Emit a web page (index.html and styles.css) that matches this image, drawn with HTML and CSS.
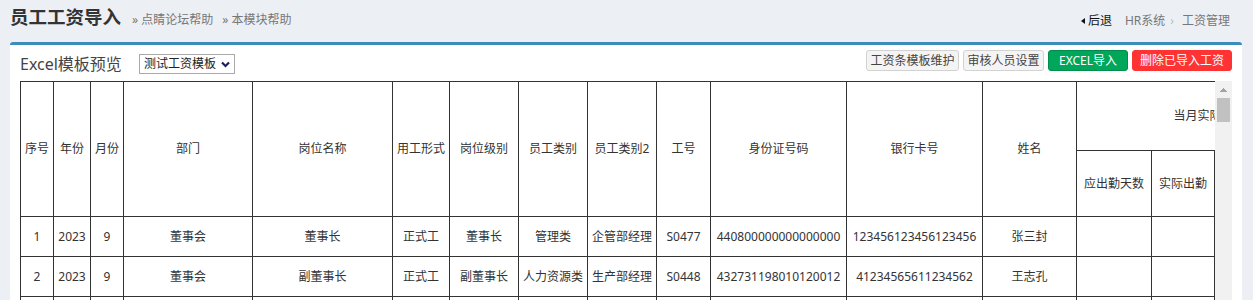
FILE: index.html
```html
<!DOCTYPE html>
<html lang="zh-CN">
<head>
    <meta charset="UTF-8">
    <meta name="viewport" content="width=device-width, initial-scale=1.0">
    <title>员工工资导入</title>
    <link rel="stylesheet" href="styles.css">
</head>
<body>
    <div class="content-header">
        <h1>员工工资导入<small>» 点睛论坛帮助</small><small>» 本模块帮助</small></h1>
        <ol class="breadcrumb">
            <li><a class="back">后退</a></li>
            <li>HR系统</li>
            <li>工资管理</li>
        </ol>
    </div>
    <div class="box">
        <div class="toolbar">
            <div class="preview">
                <span class="preview-title">Excel模板预览</span>
                <span class="select-wrap">
                    <select id="template">
                        <option>测试工资模板</option>
                    </select>
                    <svg class="chevron" width="9" height="7" viewBox="0 0 9 7"><path d="M1 1.5 L4.5 5 L8 1.5" fill="none" stroke="#1e1e5c" stroke-width="2.2"/></svg>
                </span>
            </div>
            <div class="actions">
                <a class="btn">工资条模板维护</a>
                <a class="btn">审核人员设置</a>
                <a class="btn btn-success">EXCEL导入</a>
                <a class="btn btn-danger">删除已导入工资</a>
            </div>
        </div>
        <div class="sheet-wrap">
            <div class="sheet">
                <table>
                    <colgroup>
                        <col style="width:33px"><col style="width:37px"><col style="width:33px"><col style="width:129px">
                        <col style="width:140px"><col style="width:57px"><col style="width:69px"><col style="width:69px">
                        <col style="width:69px"><col style="width:54px"><col style="width:136px"><col style="width:136px">
                        <col style="width:94px"><col style="width:75px"><col style="width:63px"><col style="width:64px">
                        <col style="width:64px"><col style="width:80px"><col style="width:80px"><col style="width:80px">
                    </colgroup>
                    <thead>
                        <tr class="head-top">
                            <th rowspan="2">序号</th>
                            <th rowspan="2">年份</th>
                            <th rowspan="2">月份</th>
                            <th rowspan="2">部门</th>
                            <th rowspan="2">岗位名称</th>
                            <th rowspan="2">用工形式</th>
                            <th rowspan="2">岗位级别</th>
                            <th rowspan="2">员工类别</th>
                            <th rowspan="2">员工类别2</th>
                            <th rowspan="2">工号</th>
                            <th rowspan="2">身份证号码</th>
                            <th rowspan="2">银行卡号</th>
                            <th rowspan="2">姓名</th>
                            <th colspan="4">当月实际考勤</th>
                            <th rowspan="2">基本工资</th>
                            <th rowspan="2">岗位工资</th>
                            <th rowspan="2">实发工资</th>
                        </tr>
                        <tr class="head-sub">
                            <th>应出勤天数</th>
                            <th>实际出勤</th>
                            <th>请假天数</th>
                            <th>旷工天数</th>
                        </tr>
                    </thead>
                    <tbody>
                        <tr>
                            <td>1</td><td>2023</td><td>9</td><td>董事会</td><td>董事长</td><td>正式工</td><td>董事长</td>
                            <td>管理类</td><td>企管部经理</td><td>S0477</td><td>440800000000000000</td><td>123456123456123456</td>
                            <td>张三封</td><td></td><td></td><td></td><td></td><td></td><td></td><td></td>
                        </tr>
                        <tr>
                            <td>2</td><td>2023</td><td>9</td><td>董事会</td><td>副董事长</td><td>正式工</td><td>副董事长</td>
                            <td>人力资源类</td><td>生产部经理</td><td>S0448</td><td>432731198010120012</td><td>41234565611234562</td>
                            <td>王志孔</td><td></td><td></td><td></td><td></td><td></td><td></td><td></td>
                        </tr>
                        <tr>
                            <td>3</td><td>2023</td><td>9</td><td>生产部</td><td>生产主管</td><td>正式工</td><td>主管</td>
                            <td>生产类</td><td>生产部主管</td><td>S0502</td><td>440300198703210015</td><td>62220200112233445</td>
                            <td>陈立</td><td></td><td></td><td></td><td></td><td></td><td></td><td></td>
                        </tr>
                    </tbody>
                </table>
            </div>
            <div class="vscroll">
                <span class="vscroll-up"></span>
                <span class="vscroll-thumb"></span>
            </div>
        </div>
    </div>
</body>
</html>
```

FILE: styles.css
```css
body {
    margin: 0;
    padding: 0 11px 0 10px;
    background-color: #ecf0f5;
    font-family: "Noto Sans", "Noto Sans CJK SC", sans-serif;
    font-size: 12px;
    color: #333;
}
.content-header {
    display: flex;
    justify-content: space-between;
    align-items: flex-start;
    height: 42px;
    box-sizing: border-box;
    padding-top: 5px;
}
.content-header h1 {
    margin: 0;
    font-size: 18.5px;
    line-height: 24px;
    font-weight: bold;
    color: #333;
}
.content-header small {
    font-size: 12px;
    font-weight: normal;
    color: #777;
    margin-left: 11px;
}
.content-header small + small {
    margin-left: 9px;
}
.breadcrumb {
    display: flex;
    margin: 8px 12px 0 0;
    padding: 0;
    list-style: none;
    line-height: 16px;
    color: #777;
}
.breadcrumb li + li::before {
    content: "›";
    color: #bbb;
    padding: 0 8px 0 5px;
}
.breadcrumb li:first-child + li::before {
    content: none;
}
.back {
    color: #111;
    margin-right: 13px;
}
.back::before {
    content: "";
    display: inline-block;
    border-right: 4px solid #111;
    border-top: 3.5px solid transparent;
    border-bottom: 3.5px solid transparent;
    margin-right: 3px;
    vertical-align: 1px;
}
.box {
    background-color: #fff;
    border-top: 3px solid #3c8dbc;
    border-radius: 3px;
    padding: 0 10px;
}
.toolbar {
    display: flex;
    justify-content: space-between;
    align-items: flex-start;
    padding: 5px 0 7px;
}
.preview {
    display: flex;
    align-items: center;
    gap: 17px;
    margin-top: 4px;
}
.preview-title {
    font-size: 16px;
    line-height: 20px;
    color: #444;
}
.select-wrap {
    position: relative;
    display: inline-block;
    height: 20px;
}
.select-wrap select {
    appearance: none;
    width: 96px;
    height: 20px;
    box-sizing: border-box;
    border: 1px solid #a9a9a9;
    border-radius: 0;
    background: #fff;
    padding: 0 0 0 4px;
    font-family: inherit;
    font-size: 12px;
    line-height: 18px;
    color: #222;
}
.chevron {
    position: absolute;
    right: 5px;
    top: 7px;
    pointer-events: none;
}
.actions {
    display: flex;
    gap: 4px;
}
.btn {
    display: inline-block;
    height: 21px;
    box-sizing: border-box;
    line-height: 19px;
    padding: 0 3.5px;
    border: 1px solid #d2d2d2;
    border-radius: 3px;
    background-color: #f4f4f4;
    color: #444;
    white-space: nowrap;
}
.btn-success {
    background-color: #00a65a;
    border-color: #008d4c;
    color: #fff;
    padding: 0 10px;
}
.btn-danger {
    background-color: #f33;
    border-color: #f33;
    color: #fff;
    padding: 0 7px;
}
.sheet-wrap {
    position: relative;
}
.sheet {
    overflow: hidden;
    margin-right: 17px;
}
.sheet table {
    border-collapse: collapse;
    table-layout: fixed;
    width: 1522px;
}
.sheet th,
.sheet td {
    border: 1px solid #333;
    padding: 0 2px;
    text-align: center;
    font-weight: normal;
    white-space: nowrap;
    overflow: hidden;
    line-height: 16px;
}
.head-top {
    height: 69px;
}
.head-sub {
    height: 66px;
}
.sheet tbody tr {
    height: 40px;
}
/* 表格右侧的竖向滚动条 */
.vscroll {
    position: absolute;
    top: 0;
    right: 0;
    bottom: 0;
    width: 17px;
    background-color: #f1f1f1;
}
.vscroll-up {
    display: block;
    height: 17px;
    background:
        linear-gradient(to bottom right, transparent 50%, #a3a3a3 50%) 5px 7px / 4px 4px no-repeat,
        linear-gradient(to bottom left, transparent 50%, #a3a3a3 50%) 9px 7px / 4px 4px no-repeat;
}
.vscroll-thumb {
    display: block;
    height: 24px;
    margin: 0 2px;
    background-color: #c1c1c1;
}
```
